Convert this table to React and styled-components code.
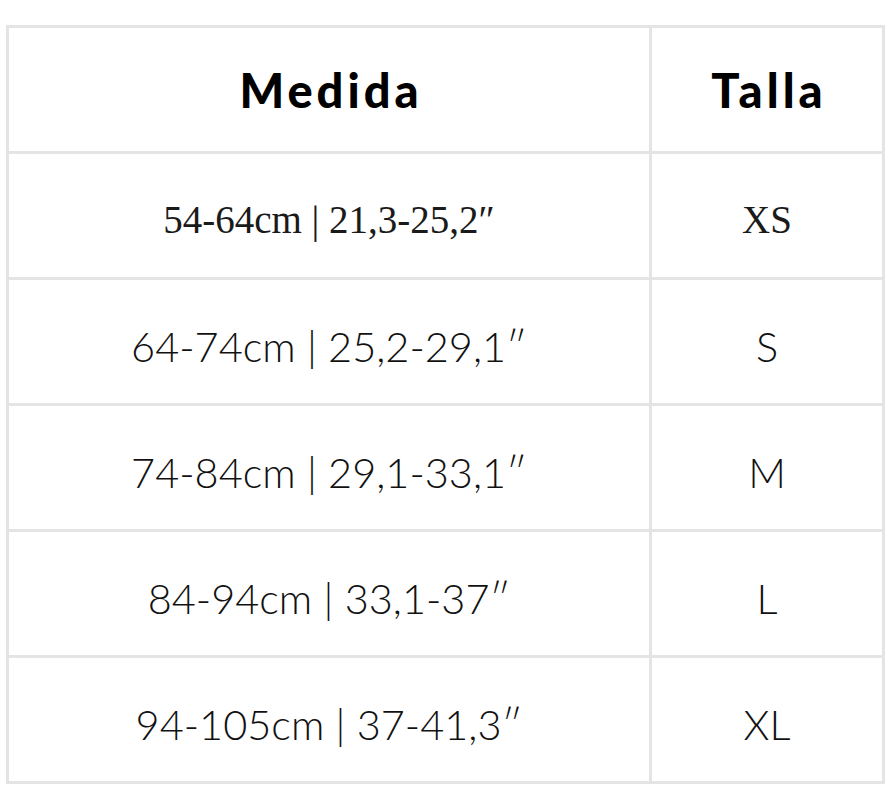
import React from 'react'
import styled, { createGlobalStyle } from 'styled-components'

const Global = createGlobalStyle`
  body {
    margin: 0;
    background: #fff;
  }
`

const rows = [
  { medida: '54-64cm | 21,3-25,2″', talla: 'XS', serif: true },
  { medida: '64-74cm | 25,2-29,1″', talla: 'S' },
  { medida: '74-84cm | 29,1-33,1″', talla: 'M' },
  { medida: '84-94cm | 33,1-37″', talla: 'L' },
  { medida: '94-105cm | 37-41,3″', talla: 'XL' },
]

export default function App() {
  return (
    <Page>
      <Global />
      <SizeTable>
        <colgroup>
          <col style={{ width: 643 }} />
          <col />
        </colgroup>
        <thead>
          <tr>
            <Head>Medida</Head>
            <Head>Talla</Head>
          </tr>
        </thead>
        <tbody>
          {rows.map((r) => (
            <tr key={r.talla}>
              <Cell $serif={r.serif}>{r.medida}</Cell>
              <Cell $serif={r.serif}>{r.talla}</Cell>
            </tr>
          ))}
        </tbody>
      </SizeTable>
    </Page>
  )
}

const Page = styled.div`
  padding: 25px 0 0 6px;
  width: 880px;
`

const SizeTable = styled.table`
  width: 879px;
  border-collapse: collapse;
  table-layout: fixed;
  border: 3px solid #e4e4e4;
`

const Head = styled.th`
  height: 123px;
  padding: 0 0 0 4px;
  border: 3px solid #e4e4e4;
  font-family: Lato, "Noto Sans", sans-serif;
  font-weight: 900;
  font-size: 47px;
  letter-spacing: 4px;
  color: #000;
  text-align: center;
  vertical-align: middle;
`

const Cell = styled.td`
  height: 115px;
  padding: 8px 0 0;
  border: 3px solid #e4e4e4;
  text-align: center;
  vertical-align: middle;
  color: ${(p) => (p.$serif ? '#1a1a1a' : '#111')};
  font-family: ${(p) => (p.$serif ? '"Liberation Serif", serif' : 'Lato, "Noto Sans", sans-serif')};
  font-weight: ${(p) => (p.$serif ? 400 : 300)};
  font-size: ${(p) => (p.$serif ? '39px' : '41.5px')};
`
